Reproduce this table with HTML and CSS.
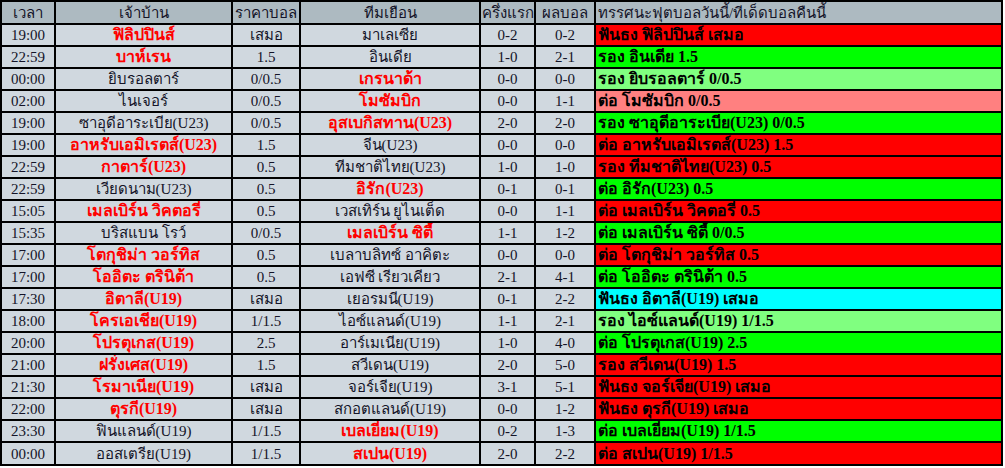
FILE: index.html
```html
<!DOCTYPE html>
<html lang="th">
<head>
<meta charset="utf-8">
<title>ทรรศนะฟุตบอล</title>
<link rel="stylesheet" href="styles.css">
</head>
<body>
<table class="tips">
<colgroup>
<col class="c-time"><col class="c-home"><col class="c-odds"><col class="c-away"><col class="c-half"><col class="c-full"><col class="c-tip">
</colgroup>
<thead>
<tr><th>เวลา</th><th>เจ้าบ้าน</th><th>ราคาบอล</th><th>ทีมเยือน</th><th>ครึ่งแรก</th><th>ผลบอล</th><th class="tip-h">ทรรศนะฟุตบอลวันนี้/ทีเด็ดบอลคืนนี้</th></tr>
</thead>
<tbody>
<tr><td>19:00</td><td class="fav">ฟิลิปปินส์</td><td>เสมอ</td><td>มาเลเซีย</td><td>0-2</td><td>0-2</td><td class="tip red">ฟันธง ฟิลิปปินส์ เสมอ</td></tr>
<tr><td>22:59</td><td class="fav">บาห์เรน</td><td>1.5</td><td>อินเดีย</td><td>1-0</td><td>2-1</td><td class="tip green">รอง อินเดีย 1.5</td></tr>
<tr><td>00:00</td><td>ยิบรอลตาร์</td><td>0/0.5</td><td class="fav">เกรนาด้า</td><td>0-0</td><td>0-0</td><td class="tip lgreen">รอง ยิบรอลตาร์ 0/0.5</td></tr>
<tr><td>02:00</td><td>ไนเจอร์</td><td>0/0.5</td><td class="fav">โมซัมบิก</td><td>0-0</td><td>1-1</td><td class="tip pink">ต่อ โมซัมบิก 0/0.5</td></tr>
<tr><td>19:00</td><td>ซาอุดีอาระเบีย(U23)</td><td>0/0.5</td><td class="fav">อุสเบกิสทาน(U23)</td><td>2-0</td><td>2-0</td><td class="tip green">รอง ซาอุดีอาระเบีย(U23) 0/0.5</td></tr>
<tr><td>19:00</td><td class="fav">อาหรับเอมิเรตส์(U23)</td><td>1.5</td><td>จีน(U23)</td><td>0-0</td><td>0-0</td><td class="tip red">ต่อ อาหรับเอมิเรตส์(U23) 1.5</td></tr>
<tr><td>22:59</td><td class="fav">กาตาร์(U23)</td><td>0.5</td><td>ทีมชาติไทย(U23)</td><td>1-0</td><td>1-0</td><td class="tip red">รอง ทีมชาติไทย(U23) 0.5</td></tr>
<tr><td>22:59</td><td>เวียดนาม(U23)</td><td>0.5</td><td class="fav">อิรัก(U23)</td><td>0-1</td><td>0-1</td><td class="tip green">ต่อ อิรัก(U23) 0.5</td></tr>
<tr><td>15:05</td><td class="fav">เมลเบิร์น วิคตอรี่</td><td>0.5</td><td>เวสเทิร์น ยูไนเต็ด</td><td>0-0</td><td>1-1</td><td class="tip red">ต่อ เมลเบิร์น วิคตอรี่ 0.5</td></tr>
<tr><td>15:35</td><td>บริสแบน โรว์</td><td>0/0.5</td><td class="fav">เมลเบิร์น ซิตี้</td><td>1-1</td><td>1-2</td><td class="tip green">ต่อ เมลเบิร์น ซิตี้ 0/0.5</td></tr>
<tr><td>17:00</td><td class="fav">โตกุชิม่า วอร์ทิส</td><td>0.5</td><td>เบลาบลิทซ์ อาคิตะ</td><td>0-0</td><td>0-0</td><td class="tip red">ต่อ โตกุชิม่า วอร์ทิส 0.5</td></tr>
<tr><td>17:00</td><td class="fav">โออิตะ ตรินิต้า</td><td>0.5</td><td>เอฟซี เรียวเคียว</td><td>2-1</td><td>4-1</td><td class="tip green">ต่อ โออิตะ ตรินิต้า 0.5</td></tr>
<tr><td>17:30</td><td class="fav">อิตาลี(U19)</td><td>เสมอ</td><td>เยอรมนี(U19)</td><td>0-1</td><td>2-2</td><td class="tip cyan">ฟันธง อิตาลี(U19) เสมอ</td></tr>
<tr><td>18:00</td><td class="fav">โครเอเชีย(U19)</td><td>1/1.5</td><td>ไอซ์แลนด์(U19)</td><td>1-1</td><td>2-1</td><td class="tip lgreen">รอง ไอซ์แลนด์(U19) 1/1.5</td></tr>
<tr><td>20:00</td><td class="fav">โปรตุเกส(U19)</td><td>2.5</td><td>อาร์เมเนีย(U19)</td><td>1-0</td><td>4-0</td><td class="tip green">ต่อ โปรตุเกส(U19) 2.5</td></tr>
<tr><td>21:00</td><td class="fav">ฝรั่งเศส(U19)</td><td>1.5</td><td>สวีเดน(U19)</td><td>2-0</td><td>5-0</td><td class="tip red">รอง สวีเดน(U19) 1.5</td></tr>
<tr><td>21:30</td><td class="fav">โรมาเนีย(U19)</td><td>เสมอ</td><td>จอร์เจีย(U19)</td><td>3-1</td><td>5-1</td><td class="tip red">ฟันธง จอร์เจีย(U19) เสมอ</td></tr>
<tr><td>22:00</td><td class="fav">ตุรกี(U19)</td><td>เสมอ</td><td>สกอตแลนด์(U19)</td><td>0-0</td><td>1-2</td><td class="tip red">ฟันธง ตุรกี(U19) เสมอ</td></tr>
<tr><td>23:30</td><td>ฟินแลนด์(U19)</td><td>1/1.5</td><td class="fav">เบลเยี่ยม(U19)</td><td>0-2</td><td>1-3</td><td class="tip green">ต่อ เบลเยี่ยม(U19) 1/1.5</td></tr>
<tr><td>00:00</td><td>ออสเตรีย(U19)</td><td>1/1.5</td><td class="fav">สเปน(U19)</td><td>2-0</td><td>2-2</td><td class="tip red">ต่อ สเปน(U19) 1/1.5</td></tr>
</tbody>
</table>
</body>
</html>
```
FILE: styles.css
```css
html, body {
  margin: 0;
  padding: 0;
  background: #ffffff;
}

.tips {
  border-collapse: collapse;
  table-layout: fixed;
  width: 1003px;
  font-family: "Liberation Serif", "Times New Roman", serif;
  font-size: 15px;
  color: #141428;
}

.c-time { width: 54px; }
.c-home { width: 177px; }
.c-odds { width: 68px; }
.c-away { width: 180px; }
.c-half { width: 55px; }
.c-full { width: 60px; }
.c-tip { width: 407px; }

.tips th,
.tips td {
  border: 2px solid #000000;
  padding: 0;
  height: 20px;
  line-height: 20px;
  text-align: center;
  white-space: nowrap;
  overflow: hidden;
  background: #d0d8df;
}

.tips th {
  font-weight: normal;
  background: #adbac1;
  height: 21px;
}

.tips tbody tr:last-child td {
  height: 21px;
}

.tips th.tip-h {
  text-align: left;
  padding-left: 2px;
}

.tips td.fav {
  color: #ff0000;
  font-weight: bold;
  font-size: 16px;
}

.tips td.tip {
  text-align: left;
  padding-left: 2px;
  font-weight: bold;
  font-size: 16px;
  color: #000000;
}

.tips td.red { background: #ff0000; }
.tips td.green { background: #00ff00; }
.tips td.lgreen { background: #80ff80; }
.tips td.pink { background: #ff8080; }
.tips td.cyan { background: #00ffff; }
```
